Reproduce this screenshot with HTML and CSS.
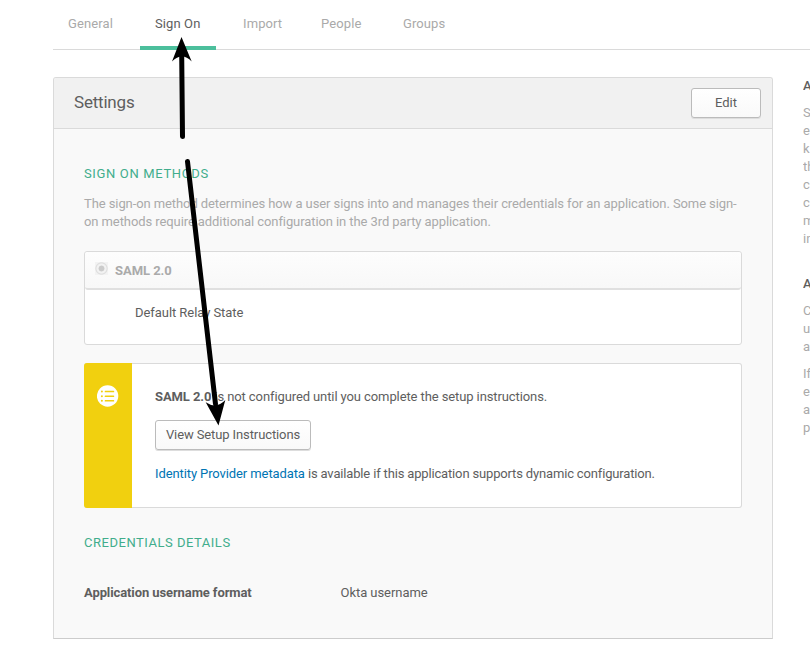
FILE: index.html
```html
<!DOCTYPE html>
<html lang="en">
<head>
<meta charset="utf-8">
<title>Sign On</title>
<link rel="stylesheet" href="styles.css">
</head>
<body>
<nav class="tabs">
  <a class="tab tab-general">General</a>
  <a class="tab tab-signon active">Sign On</a>
  <a class="tab tab-import">Import</a>
  <a class="tab tab-people">People</a>
  <a class="tab tab-groups">Groups</a>
</nav>
<div class="columns">
  <main class="panel">
    <header class="panel-head">
      <h1>Settings</h1>
      <button class="btn btn-edit">Edit</button>
    </header>
    <div class="panel-body">
      <h2 class="h-methods">Sign on methods</h2>
      <p class="intro">The sign-on method determines how a user signs into and manages their credentials for an application. Some sign-<br>on methods require additional configuration in the 3rd party application.</p>
      <section class="method">
        <div class="method-head"><span class="radio"></span><b>SAML 2.0</b></div>
        <div class="method-body"><span>Default Relay State</span></div>
      </section>
      <section class="notice">
        <div class="notice-side">
          <svg width="22" height="22" viewBox="0 0 22 22"><circle cx="10.600" cy="11" r="10.7" fill="#fff"/><g fill="#f1d00f"><circle cx="4.900" cy="6.500" r="1"/><circle cx="4.900" cy="11.200" r="1"/><circle cx="4.900" cy="15.800" r="1"/><rect x="7.700" y="5.800" width="9.500" height="1.500" rx=".6"/><rect x="7.700" y="10.500" width="9.500" height="1.500" rx=".6"/><rect x="7.700" y="15.100" width="9.500" height="1.500" rx=".6"/></g></svg>
        </div>
        <div class="notice-body">
          <p class="n1"><b>SAML 2.0</b> is not configured until you complete the setup instructions.</p>
          <button class="btn btn-setup">View Setup Instructions</button>
          <p class="n2"><a class="link">Identity Provider metadata</a> is available if this application supports dynamic configuration.</p>
        </div>
      </section>
      <h2 class="h-cred">Credentials details</h2>
      <div class="field"><b>Application username format</b><span>Okta username</span></div>
    </div>
  </main>
  <aside class="side">
    <h3>A</h3>
    <p>S<br>e<br>k<br>th<br>c<br>c<br>m<br>in</p>
    <h3 class="second">A</h3>
    <p>C<br>u<br>a</p>
    <p>If<br>e<br>a<br>p</p>
  </aside>
</div>
<svg class="arrows" width="810" height="658" viewBox="0 0 810 658">
  <g stroke="#000" stroke-width="5" stroke-linecap="round"><path d="M182.5 136.500L181.700 55"/><path d="M187.500 161.500L215.500 404"/></g>
  <path d="M181.500 37L191.700 61.500Q182 51.500 172 61.500Z"/>
  <path d="M218.500 425.500L225.300 400Q216.500 409.500 205.700 402.300Z"/>
</svg>
</body>
</html>
```
FILE: styles.css
```css
* { box-sizing: border-box; }
html, body { margin: 0; overflow: hidden; }
body { width: 810px; height: 658px; background: #fff; color: #5e5e5e; font: 13px/18px Roboto, "Liberation Sans", sans-serif; }
h1, h2, h3, p { margin: 0; font-weight: 400; }
b { font-weight: 700; }
.tabs { display: flex; gap: 12px; height: 50px; margin-left: 53px; border-bottom: 1px solid #dadada; }
.tab { height: 50px; padding: 15px 15px 0; color: #aaa; letter-spacing: .1px; white-space: nowrap; }
.tab.active { color: #5e5e5e; border-bottom: 4px solid #4cbf9c; }
.tab-general { width: 75px; }
.tab-signon { width: 76px; }
.tab-import { width: 66px; }
.tab-people { width: 70px; }
.tab-groups { width: 72px; }
.columns { display: flex; padding: 27px 0 0 53px; }
.panel { flex: none; width: 720px; height: 562px; background: #f9f9f9; border: 1px solid #dadada; border-bottom-color: #ccc; border-radius: 3px 3px 0 0; }
.panel-head { display: flex; align-items: center; justify-content: space-between; height: 51px; padding: 0 11px 0 20px; background: #f1f1f1; border-bottom: 1px solid #dadada; border-radius: 2px 2px 0 0; }
h1 { padding-bottom: 2px; font-size: 17px; line-height: 22px; letter-spacing: -.2px; }
.btn { display: block; height: 30px; padding: 0 0 1px; font: inherit; color: #5e5e5e; background: linear-gradient(#fff, #f9f9f9); border: 1px solid #bbb; border-radius: 3px; box-shadow: 0 1px 0 #ddd; white-space: nowrap; }
.btn-edit { width: 70px; }
.panel-body { padding: 36px 30px 0; white-space: nowrap; }
h2 { color: #41ad8c; text-transform: uppercase; font-size: 13px; line-height: 18px; letter-spacing: .65px; }
.intro { margin-top: 12px; color: #aaa; letter-spacing: -.087px; }
.method { width: 658px; height: 94px; margin-top: 20px; background: #fff; border: 1px solid #dadada; border-radius: 3px; }
.method-head { display: flex; align-items: center; height: 38px; padding: 1px 0 0 10px; color: #aaa; letter-spacing: -.05px; background: linear-gradient(#fdfdfd, #f8f8f8); border-bottom: 2px solid #e0e0e0; border-radius: 3px; }
.radio { width: 13px; height: 13px; margin: -4px 7px 0 0; background: radial-gradient(circle, #cbcbcb 0 2.6px, #f2f2f2 3.3px 4.6px, #e0e0e0 5.4px 5.8px, #f3f3f3 6.6px); }
.method-body { padding: 14px 0 0 50px; letter-spacing: -.06px; }
.notice { display: flex; width: 658px; height: 145px; margin-top: 18px; background: #fff; border: 1px solid #dadada; border-left: 0; border-radius: 3px; }
.notice-side { width: 48px; height: 145px; margin-top: -1px; padding: 22px 0 0 13px; background: #f1d00f; border-radius: 3px 0 0 3px; }
.notice-side svg { display: block; }
.notice-body { padding: 24px 0 0 23px; }
.n1 { letter-spacing: -.1px; }
.n2 { letter-spacing: -.16px; }
.btn-setup { width: 156px; margin: 14px 0 15px; letter-spacing: -.11px; }
.link { color: #0074b3; letter-spacing: -.1px; }
.h-cred { margin-top: 26px; letter-spacing: .52px; }
.field { display: flex; margin-top: 32px; }
.field b { width: 256.5px; letter-spacing: -.1px; }
.field span { letter-spacing: -.05px; }
.side { width: 7px; margin-left: 30px; overflow: hidden; color: #aaa; white-space: nowrap; }
h3 { font-size: 13px; line-height: 18px; font-weight: 500; color: #5e5e5e; }
.side p { margin-top: 9px; }
.side .second { margin-top: 27px; }
.arrows { position: absolute; left: 0; top: 0; pointer-events: none; }
```
